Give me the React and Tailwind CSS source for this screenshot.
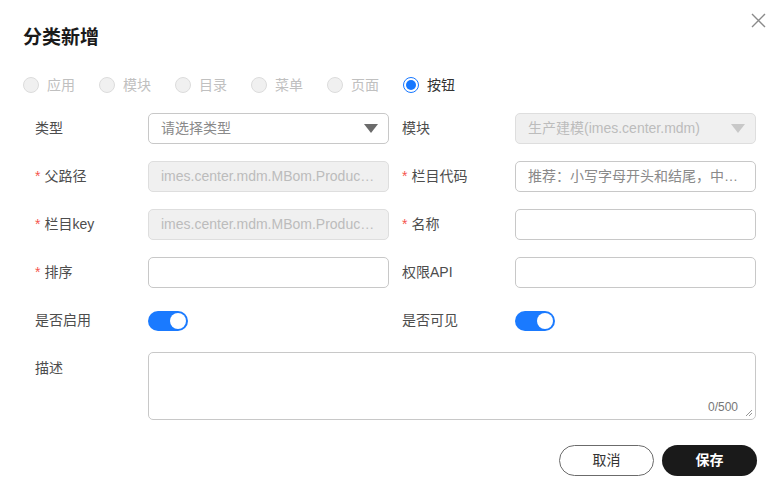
import { useState } from "react";

const font = { fontFamily: '"Liberation Sans", "Noto Sans CJK SC", sans-serif' };

function Radio({ label, checked, disabled }) {
  return (
    <label className="flex items-center gap-[8px]">
      {checked ? (
        <span className="flex h-[16px] w-[16px] items-center justify-center rounded-full border border-[#1677ff] bg-white">
          <span className="h-[10px] w-[10px] rounded-full bg-[#1677ff]" />
        </span>
      ) : (
        <span className="h-[16px] w-[16px] rounded-full border border-[#dcdcdc] bg-[#f0f0f0]" />
      )}
      <span className={disabled ? "text-[14px] text-[#c0c0c0]" : "text-[14px] text-[#333]"}>{label}</span>
    </label>
  );
}

function Label({ required, children }) {
  return (
    <div className="flex w-[113px] shrink-0 items-center text-[14px] text-[#4d4d4d]">
      {required && <span className="mr-[4px] text-[#f5564e]">*</span>}
      {children}
    </div>
  );
}

function Arrow({ light }) {
  return (
    <svg width="14" height="9" viewBox="0 0 14 9">
      <path d="M0 0h14L7 9z" fill={light ? "#c8c8c8" : "#6b6b6b"} />
    </svg>
  );
}

function Field({ value, placeholder, disabled, select }) {
  return (
    <div
      className={
        "flex h-[31px] w-[241px] items-center justify-between rounded-[5px] border pl-[12px] pr-[10px] text-[14px] " +
        (disabled ? "border-[#dedede] bg-[#f0f0f0] text-[#bcbcbc]" : "border-[#c8c8c8] bg-white text-[#8a8a8a]")
      }
    >
      <span className="truncate">{value || placeholder}</span>
      {select && <Arrow light={disabled} />}
    </div>
  );
}

function Toggle() {
  return (
    <div className="flex h-[20px] w-[40px] items-center justify-end rounded-full bg-[#1a7aff] px-[2px]">
      <span className="h-[16px] w-[16px] rounded-full bg-white" />
    </div>
  );
}

function Row({ children }) {
  return <div className="flex h-[31px] items-center">{children}</div>;
}

export default function App() {
  const [type] = useState("按钮");
  const radios = ["应用", "模块", "目录", "菜单", "页面", "按钮"];

  return (
    <div className="relative h-[493px] w-[775px] overflow-hidden bg-white" style={font}>
      <button className="absolute right-[9px] top-[13px] p-0">
        <svg width="15" height="15" viewBox="0 0 15 15">
          <path d="M1 1l13 13M14 1L1 14" stroke="#8a8a8a" strokeWidth="1.4" />
        </svg>
      </button>

      <div className="px-[23px] pt-[28px]">
        <h1 className="text-[19px] font-bold leading-[20px] text-[#1a1a1a]">分类新增</h1>
        <div className="mt-[27px] flex h-[20px] items-center gap-[24px]">
          {radios.map((r) => (
            <Radio key={r} label={r} checked={r === type} disabled={r !== type} />
          ))}
        </div>
      </div>

      <div className="mt-[18px] pl-[35px] pr-[18px]">
        <div className="grid grid-cols-[354px_354px] gap-x-[13px] gap-y-[17px]">
          <Row>
            <Label>类型</Label>
            <Field placeholder="请选择类型" select />
          </Row>
          <Row>
            <Label>模块</Label>
            <Field value="生产建模(imes.center.mdm)" disabled select />
          </Row>
          <Row>
            <Label required>父路径</Label>
            <Field value="imes.center.mdm.MBom.ProductBom" disabled />
          </Row>
          <Row>
            <Label required>栏目代码</Label>
            <Field placeholder="推荐：小写字母开头和结尾，中间可包含数字" />
          </Row>
          <Row>
            <Label required>栏目key</Label>
            <Field value="imes.center.mdm.MBom.ProductBom" disabled />
          </Row>
          <Row>
            <Label required>名称</Label>
            <Field />
          </Row>
          <Row>
            <Label required>排序</Label>
            <Field />
          </Row>
          <Row>
            <Label>权限API</Label>
            <Field />
          </Row>
          <Row>
            <Label>是否启用</Label>
            <Toggle />
          </Row>
          <Row>
            <Label>是否可见</Label>
            <Toggle />
          </Row>
        </div>

        <div className="mt-[16px] flex">
          <div className="w-[113px] shrink-0 pt-[6px] text-[14px] text-[#4d4d4d]">描述</div>
          <div className="relative h-[68px] w-[608px] rounded-[5px] border border-[#c8c8c8]">
            <span className="absolute bottom-[3px] right-[17px] text-[12px] text-[#777]">0/500</span>
            <svg className="absolute bottom-[2px] right-[2px]" width="8" height="8" viewBox="0 0 8 8">
              <path d="M7 1L1 7M7 4L4 7" stroke="#8a8a8a" strokeWidth="0.9" />
            </svg>
          </div>
        </div>

        <div className="mt-[25px] flex justify-end gap-[8px]">
          <button className="h-[31px] w-[95px] rounded-full border border-[#6b6b6b] bg-white text-[14px] text-[#333]">
            取消
          </button>
          <button className="h-[31px] w-[95px] rounded-full bg-[#1a1a1a] text-[14px] font-bold text-white">
            保存
          </button>
        </div>
      </div>
    </div>
  );
}
